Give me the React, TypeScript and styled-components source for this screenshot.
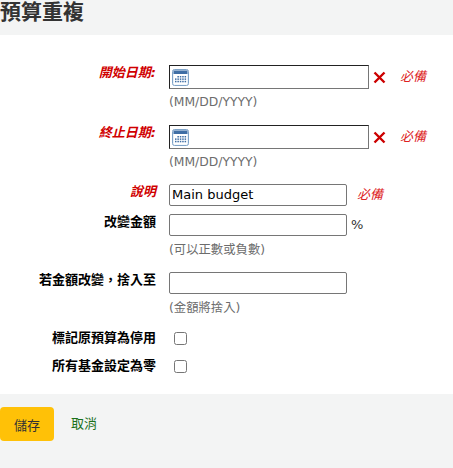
import React from "react";
import styled, { createGlobalStyle } from "styled-components";

const Global = createGlobalStyle`
  html, body { margin: 0; padding: 0; background: #fff; }
  body { font-family: "DejaVu Sans", "Noto Sans CJK TC", sans-serif; font-size: 13px; color: #000; }
`;

const Page = styled.div`
  width: 453px;
  height: 468px;
  overflow: hidden;
  display: flex;
  flex-direction: column;
`;

const Header = styled.header`
  height: 35px;
  background: #f3f4f4;
  flex: none;
`;

const Title = styled.h1`
  margin: 0;
  font-size: 21px;
  line-height: 24px;
  font-weight: 700;
  color: #333;
`;

const Form = styled.form`
  flex: 1;
  display: flex;
  flex-direction: column;
  margin: 0;
`;

const Fields = styled.ol`
  list-style: none;
  margin: 0;
  padding: 30px 0 0;
  height: 359px;
  box-sizing: border-box;
  flex: none;
`;

const Row = styled.li<{ $h: number }>`
  display: grid;
  grid-template-columns: 156px 1fr;
  column-gap: 13px;
  height: ${(p) => p.$h}px;
`;

const Label = styled.label<{ $required?: boolean }>`
  text-align: right;
  font-weight: 700;
  font-size: 13px;
  line-height: 16px;
  white-space: nowrap;
  color: ${(p) => (p.$required ? "#d00000" : "#000")};
  font-style: ${(p) => (p.$required ? "italic" : "normal")};
`;

const Control = styled.div`
  display: flex;
  flex-direction: column;
`;

const Line = styled.div`
  display: flex;
  align-items: center;
`;

const CheckLine = styled.div`
  display: flex;
  align-items: flex-start;
  padding-top: 2px;
`;

const DateBox = styled.div`
  width: 200px;
  height: 24px;
  box-sizing: border-box;
  border: 1px solid #767676;
  border-top-color: #222;
  border-left-color: #222;
  display: flex;
  align-items: center;
  padding-left: 2px;
  background: #fff;
`;

const TextInput = styled.input`
  width: 178px;
  height: 22px;
  box-sizing: border-box;
  border: 1px solid #767676;
  border-radius: 2px;
  padding: 0 2px 2px;
  font: 13px "DejaVu Sans", sans-serif;
  color: #000;
  background: #fff;
  outline: none;
`;

const Hint = styled.div<{ $top: number }>`
  margin-top: ${(p) => p.$top}px;
  font-size: 12.35px;
  line-height: 15px;
  color: #6c6c6c;
`;

const ClearIcon = styled.svg`
  margin-left: 4px;
  flex: none;
`;

const Required = styled.span<{ $left: number }>`
  margin-left: ${(p) => p.$left}px;
  font-style: italic;
  font-size: 13px;
  line-height: 18px;
  color: #dd2222;
`;

const Percent = styled.span`
  margin-left: 4px;
  padding-bottom: 2px;
  color: #333;
  font-size: 13px;
`;

const Check = styled.input`
  width: 13px;
  height: 13px;
  margin: 0 0 0 5px;
`;

const Footer = styled.footer`
  flex: 1;
  background: #f3f4f4;
  display: flex;
  align-items: flex-start;
  padding-top: 13px;
`;

const Save = styled.button`
  width: 54px;
  height: 34px;
  border: 0;
  border-radius: 4px;
  background: #ffc107;
  color: #333;
  font: 13px "DejaVu Sans", "Noto Sans CJK TC", sans-serif;
  padding: 0;
`;

const Cancel = styled.a`
  margin-left: 17px;
  line-height: 34px;
  font-size: 13px;
  color: #1a701a;
  text-decoration: none;
`;

const Calendar = () => (
  <svg width="17" height="17" viewBox="0 0 17 17" aria-hidden="true">
    <rect x="0.5" y="0.5" width="16" height="16" rx="2" fill="#e8f0f8" stroke="#7fa3c8" />
    <rect x="1.5" y="1.5" width="14" height="3.5" fill="#3f6ea5" />
    <rect x="2" y="5" width="13" height="10.5" fill="#fff" />
    <g fill="#3f6ea5">
      {[7, 9.4, 11.8].map((y) =>
        [3, 5.4, 7.8, 10.2, 12.6].map((x) =>
          y === 7 && x === 3 ? null : <rect key={`${x}-${y}`} x={x} y={y} width="1.5" height="1.5" />
        )
      )}
    </g>
  </svg>
);

const Clear = () => (
  <ClearIcon width="13" height="13" viewBox="0 0 13 13" aria-hidden="true">
    <path d="M1.5 1.5 L11.5 11.5 M11.5 1.5 L1.5 11.5" stroke="#cc0000" strokeWidth="2.4" />
  </ClearIcon>
);

export default function App() {
  return (
    <Page>
      <Global />
      <Header>
        <Title>預算重複</Title>
      </Header>
      <Form onSubmit={(e) => e.preventDefault()}>
        <Fields>
          <Row $h={60}>
            <Label $required>開始日期:</Label>
            <Control>
              <Line>
                <DateBox><Calendar /></DateBox>
                <Clear />
                <Required $left={14}>必備</Required>
              </Line>
              <Hint $top={6}>(MM/DD/YYYY)</Hint>
            </Control>
          </Row>
          <Row $h={59}>
            <Label $required>終止日期:</Label>
            <Control>
              <Line>
                <DateBox><Calendar /></DateBox>
                <Clear />
                <Required $left={14}>必備</Required>
              </Line>
              <Hint $top={6}>(MM/DD/YYYY)</Hint>
            </Control>
          </Row>
          <Row $h={30}>
            <Label $required>說明</Label>
            <Control>
              <Line>
                <TextInput defaultValue="Main budget" />
                <Required $left={10}>必備</Required>
              </Line>
            </Control>
          </Row>
          <Row $h={58}>
            <Label>改變金額</Label>
            <Control>
              <Line>
                <TextInput />
                <Percent>%</Percent>
              </Line>
              <Hint $top={7}>(可以正數或負數)</Hint>
            </Control>
          </Row>
          <Row $h={58}>
            <Label>若金額改變，捨入至</Label>
            <Control>
              <Line>
                <TextInput />
              </Line>
              <Hint $top={7}>(金額將捨入)</Hint>
            </Control>
          </Row>
          <Row $h={28}>
            <Label>標記原預算為停用</Label>
            <CheckLine><Check type="checkbox" /></CheckLine>
          </Row>
          <Row $h={28}>
            <Label>所有基金設定為零</Label>
            <CheckLine><Check type="checkbox" /></CheckLine>
          </Row>
        </Fields>
        <Footer>
          <Save type="submit">儲存</Save>
          <Cancel href="#">取消</Cancel>
        </Footer>
      </Form>
    </Page>
  );
}
